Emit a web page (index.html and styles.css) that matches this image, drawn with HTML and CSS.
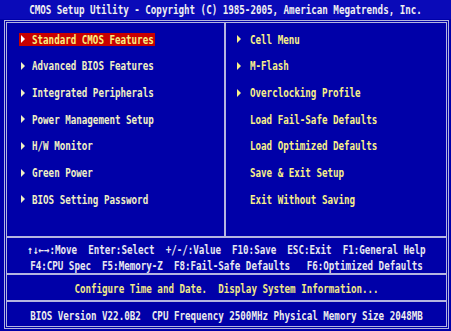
FILE: index.html
```html
<!DOCTYPE html>
<html>
<head>
<meta charset="utf-8">
<link rel="stylesheet" href="styles.css">
</head>
<body>
<div class="title"><span class="t">CMOS Setup Utility - Copyright (C) 1985-2005, American Megatrends, Inc.</span></div>
<div class="frame">
  <div class="menu">
    <ul class="col left">
      <li class="row sel"><span class="box"><i class="arr"></i><span class="t">Standard CMOS Features</span></span></li>
      <li class="row"><span class="box"><i class="arr"></i><span class="t">Advanced BIOS Features</span></span></li>
      <li class="row"><span class="box"><i class="arr"></i><span class="t">Integrated Peripherals</span></span></li>
      <li class="row"><span class="box"><i class="arr"></i><span class="t">Power Management Setup</span></span></li>
      <li class="row"><span class="box"><i class="arr"></i><span class="t">H/W Monitor</span></span></li>
      <li class="row"><span class="box"><i class="arr"></i><span class="t">Green Power</span></span></li>
      <li class="row"><span class="box"><i class="arr"></i><span class="t">BIOS Setting Password</span></span></li>
    </ul>
    <ul class="col right">
      <li class="row"><span class="box"><i class="arr"></i><span class="t">Cell Menu</span></span></li>
      <li class="row"><span class="box"><i class="arr"></i><span class="t">M-Flash</span></span></li>
      <li class="row"><span class="box"><i class="arr"></i><span class="t">Overclocking Profile</span></span></li>
      <li class="row"><span class="box"><i class="arr none"></i><span class="t">Load Fail-Safe Defaults</span></span></li>
      <li class="row"><span class="box"><i class="arr none"></i><span class="t">Load Optimized Defaults</span></span></li>
      <li class="row"><span class="box"><i class="arr none"></i><span class="t">Save &amp; Exit Setup</span></span></li>
      <li class="row"><span class="box"><i class="arr none"></i><span class="t">Exit Without Saving</span></span></li>
    </ul>
  </div>
  <div class="help">
    <div class="line"><span class="t">↑↓←→:Move  Enter:Select  +/-/:Value  F10:Save  ESC:Exit  F1:General Help</span></div>
    <div class="line"><span class="t">F4:CPU Spec  F5:Memory-Z  F8:Fail-Safe Defaults   F6:Optimized Defaults</span></div>
  </div>
  <div class="desc"><span class="t">Configure Time and Date.  Display System Information...</span></div>
  <div class="ver"><span class="t">BIOS Version V22.0B2  CPU Frequency 2500MHz Physical Memory Size 2048MB</span></div>
</div>
</body>
</html>
```
FILE: styles.css
```css
* {
  margin: 0;
  padding: 0;
  box-sizing: border-box;
}

html, body {
  width: 451px;
  height: 331px;
  overflow: hidden;
}

body {
  background: #0000a8;
  font-family: "DejaVu Sans Mono", "Liberation Mono", monospace;
  font-weight: bold;
  font-size: 9.2px;
  line-height: 11px;
}

.t {
  display: inline-block;
  white-space: pre;
  transform: scaleY(1.25);
}

.title {
  height: 19px;
  background: #0a0ab8;
  color: #f0f0f0;
  display: flex;
  align-items: center;
  justify-content: center;
}

.frame {
  margin: 1px 2px 2px 4px;
  height: 309px;
  border: 3px double #b4b4e0;
  display: flex;
  flex-direction: column;
}

.menu {
  height: 215px;
  flex: none;
  display: grid;
  grid-template-columns: 219px 1fr;
  border-bottom: 2px solid #b4b4e0;
}

.col {
  list-style: none;
  padding-top: 3px;
  display: grid;
  grid-auto-rows: 26.667px;
  align-content: start;
}

.left {
  border-right: 2px solid #b4b4e0;
  padding-left: 12px;
  color: #f0f0c4;
  --arrw: 11px;
}

.right {
  padding-left: 9px;
  color: #f8f088;
  --arrw: 13px;
}

.row {
  display: flex;
  align-items: center;
}

.box {
  display: flex;
  align-items: center;
  height: 13px;
  padding: 0 1px 0 2px;
}

.sel .box {
  background: #c80000;
  color: #f8f080;
}

.arr {
  width: var(--arrw);
  flex: none;
  display: flex;
  align-items: center;
}

.arr::before {
  content: "";
  border-left: 4px solid currentColor;
  border-top: 4px solid transparent;
  border-bottom: 4px solid transparent;
}

.sel .arr {
  color: #ffffff;
}

.arr.none::before {
  display: none;
}

.help {
  height: 37px;
  flex: none;
  padding-top: 3px;
  border-bottom: 2px solid #b4b4e0;
  color: #e8e8f0;
}

.line {
  height: 16px;
  display: flex;
  align-items: center;
  justify-content: center;
}

.desc {
  height: 27px;
  flex: none;
  padding-top: 2px;
  border-bottom: 2px solid #b4b4e0;
  color: #f0e888;
  display: flex;
  align-items: center;
  justify-content: center;
}

.ver {
  flex: 1;
  padding-top: 2px;
  color: #ececec;
  display: flex;
  align-items: center;
  justify-content: center;
}
```
